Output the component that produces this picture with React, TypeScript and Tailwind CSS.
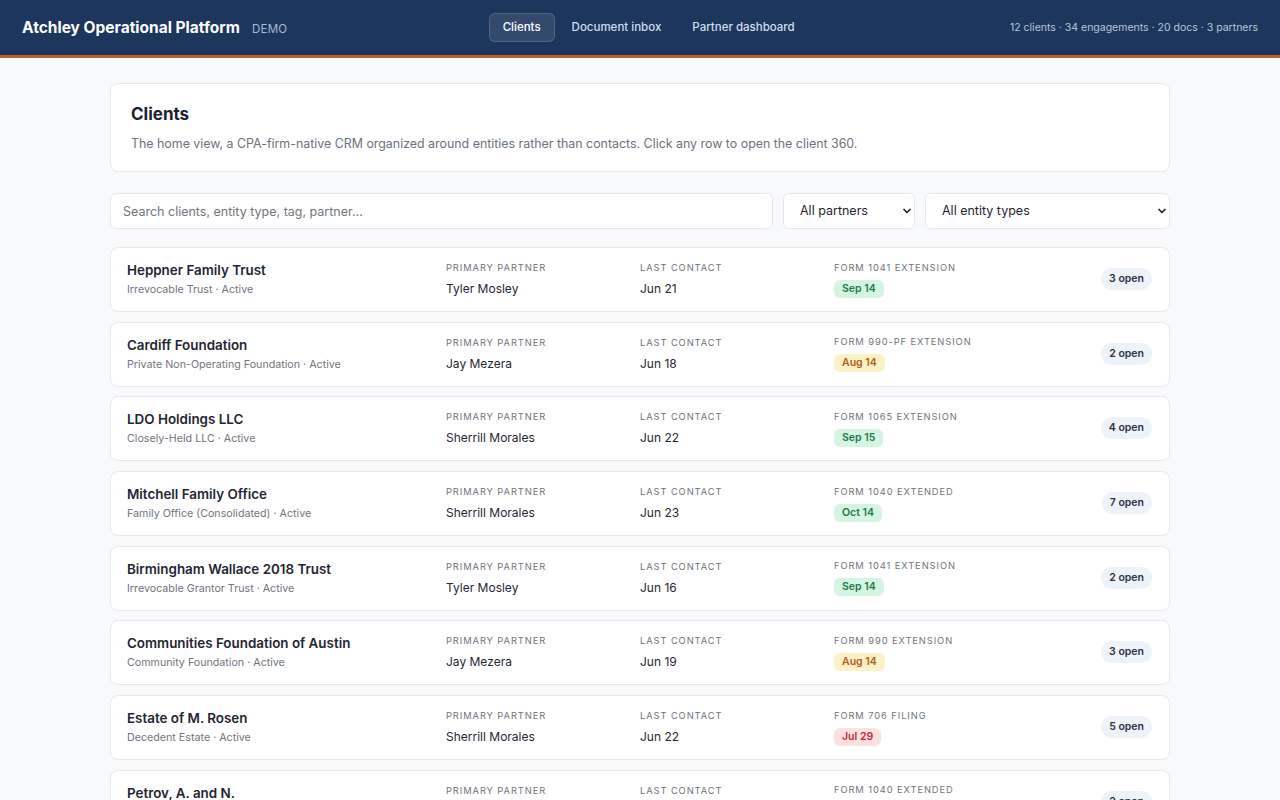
import { ChevronDown } from 'lucide-react';

type Tone = 'green' | 'amber' | 'red';

interface Client {
  name: string;
  entity: string;
  partner: string;
  lastContact: string;
  form: string;
  due: string;
  tone: Tone;
  open: number;
}

const clients: Client[] = [
  { name: 'Heppner Family Trust', entity: 'Irrevocable Trust', partner: 'Tyler Mosley', lastContact: 'Jun 21', form: 'Form 1041 extension', due: 'Sep 14', tone: 'green', open: 3 },
  { name: 'Cardiff Foundation', entity: 'Private Non-Operating Foundation', partner: 'Jay Mezera', lastContact: 'Jun 18', form: 'Form 990-PF extension', due: 'Aug 14', tone: 'amber', open: 2 },
  { name: 'LDO Holdings LLC', entity: 'Closely-Held LLC', partner: 'Sherrill Morales', lastContact: 'Jun 22', form: 'Form 1065 extension', due: 'Sep 15', tone: 'green', open: 4 },
  { name: 'Mitchell Family Office', entity: 'Family Office (Consolidated)', partner: 'Sherrill Morales', lastContact: 'Jun 23', form: 'Form 1040 extended', due: 'Oct 14', tone: 'green', open: 7 },
  { name: 'Birmingham Wallace 2018 Trust', entity: 'Irrevocable Grantor Trust', partner: 'Tyler Mosley', lastContact: 'Jun 16', form: 'Form 1041 extension', due: 'Sep 14', tone: 'green', open: 2 },
  { name: 'Communities Foundation of Austin', entity: 'Community Foundation', partner: 'Jay Mezera', lastContact: 'Jun 19', form: 'Form 990 extension', due: 'Aug 14', tone: 'amber', open: 3 },
  { name: 'Estate of M. Rosen', entity: 'Decedent Estate', partner: 'Sherrill Morales', lastContact: 'Jun 22', form: 'Form 706 filing', due: 'Jul 29', tone: 'red', open: 5 },
  { name: 'Petrov, A. and N.', entity: 'Individual (Joint)', partner: 'Tyler Mosley', lastContact: 'Jun 20', form: 'Form 1040 extended', due: 'Oct 15', tone: 'green', open: 2 },
  { name: 'Halvorsen Charitable Lead Trust', entity: 'Charitable Lead Trust', partner: 'Jay Mezera', lastContact: 'Jun 17', form: 'Form 5227 filing', due: 'Sep 14', tone: 'green', open: 2 },
  { name: 'Rivera Dental Group PC', entity: 'S Corporation', partner: 'Tyler Mosley', lastContact: 'Jun 24', form: 'Form 1120-S extension', due: 'Sep 15', tone: 'green', open: 3 },
  { name: 'Okafor Family Partnership', entity: 'Family Limited Partnership', partner: 'Sherrill Morales', lastContact: 'Jun 12', form: 'Form 1065 extension', due: 'Sep 15', tone: 'green', open: 1 },
  { name: 'Whitfield Private Foundation', entity: 'Private Operating Foundation', partner: 'Jay Mezera', lastContact: 'Jun 11', form: 'Form 990-PF extension', due: 'Aug 14', tone: 'amber', open: 0 },
];

const toneClass: Record<Tone, string> = {
  green: 'bg-[#d5f5e3] text-[#1f7a4d]',
  amber: 'bg-[#fdf1c7] text-[#b45d13]',
  red: 'bg-[#fde1e1] text-[#be2a3a]',
};

function Header() {
  return (
    <header className="flex h-[58px] items-center justify-between border-b-[3px] border-[#b5652a] bg-[#1c365d] px-[22px]">
      <div className="flex items-baseline gap-3">
        <span className="text-[15.5px] font-bold text-white">Atchley Operational Platform</span>
        <span className="text-[11.5px] tracking-wide text-[#a8b9d3]">DEMO</span>
      </div>
      <nav className="flex items-center gap-[3px] text-[11.5px] font-medium leading-[17px]">
        <a className="rounded-md border border-white/15 bg-white/10 px-[13px] py-[5px] text-white">Clients</a>
        <a className="px-[14px] py-[5px] text-[#d3deee]">Document inbox</a>
        <a className="px-[14px] py-[5px] text-[#d3deee]">Partner dashboard</a>
      </nav>
      <div className="text-[10.5px] text-[#b9c7dc]">12 clients · 34 engagements · 20 docs · 3 partners</div>
    </header>
  );
}

function Field({ label, gap, children }: { label: string; gap: string; children: React.ReactNode }) {
  return (
    <div className={`flex flex-col ${gap}`}>
      <span className="text-[9.3px] uppercase leading-[14px] tracking-[0.1em] text-[#6f747d]">{label}</span>
      {children}
    </div>
  );
}

function ClientRow({ c }: { c: Client }) {
  return (
    <div className="grid h-[65px] cursor-pointer grid-cols-[303px_178px_178px_1fr_auto] items-center gap-4 rounded-lg border border-[#e6e8ec] bg-white pt-3 pb-[14px] pl-4 pr-[17px] hover:bg-gray-50">
      <div className="flex flex-col gap-[2px]">
        <span className="text-[13.4px] font-semibold leading-5 text-[#1f2633]">{c.name}</span>
        <span className="text-[10.7px] leading-4 text-[#71757d]">{c.entity} · Active</span>
      </div>
      <Field label="Primary partner" gap="gap-[6px]">
        <span className="text-[12px] leading-4 text-[#1f2633]">{c.partner}</span>
      </Field>
      <Field label="Last contact" gap="gap-[6px]">
        <span className="text-[12px] leading-4 text-[#1f2633]">{c.lastContact}</span>
      </Field>
      <Field label={c.form} gap="gap-[5px]">
        <span className={`w-fit rounded-md px-2 py-[1px] text-[10.5px] font-semibold leading-[16px] ${toneClass[c.tone]}`}>{c.due}</span>
      </Field>
      <span className="rounded-full bg-[#eef2f9] px-2 py-[3px] text-[10.5px] font-semibold leading-4 text-[#2a3344]">{c.open} open</span>
    </div>
  );
}

function Select({ label, width }: { label: string; width: string }) {
  return (
    <div className={`relative ${width}`}>
      <select className="h-[36px] w-full appearance-none rounded-md border border-[#e6e8ec] bg-white pl-4 pr-8 text-[12.5px] text-[#1f2633] outline-none">
        <option>{label}</option>
      </select>
      <ChevronDown className="pointer-events-none absolute right-[2px] top-1/2 h-[12px] w-[12px] -translate-y-1/2 text-[#1f2633]" strokeWidth={3.5} />
    </div>
  );
}

export default function App() {
  return (
    <div className="min-h-screen bg-[#f8f9fb]" style={{ fontFamily: 'Inter, "Noto Sans", sans-serif' }}>
      <Header />
      <main className="mx-auto flex w-[1060px] flex-col pt-[25px] pb-10">
        <section className="rounded-lg border border-[#e6e8ec] bg-white px-5 pt-[18px] pb-[18px]">
          <h1 className="text-[17px] font-bold leading-6 text-[#1a2230]">Clients</h1>
          <p className="mt-[9px] text-[12.4px] leading-[18px] text-[#6b7280]">
            The home view, a CPA-firm-native CRM organized around entities rather than contacts. Click any row to open the client 360.
          </p>
        </section>

        <div className="mt-[21px] flex gap-[10px]">
          <input
            className="h-[36px] flex-1 rounded-md border border-[#e6e8ec] bg-white px-3 text-[12.5px] text-[#1f2633] outline-none placeholder:text-[#71757d]"
            placeholder="Search clients, entity type, tag, partner..."
          />
          <Select label="All partners" width="w-[132px]" />
          <Select label="All entity types" width="w-[245px]" />
        </div>

        <div className="mt-[18px] flex flex-col gap-[9.7px]">
          {clients.map((c) => (
            <ClientRow key={c.name} c={c} />
          ))}
        </div>
      </main>
    </div>
  );
}
